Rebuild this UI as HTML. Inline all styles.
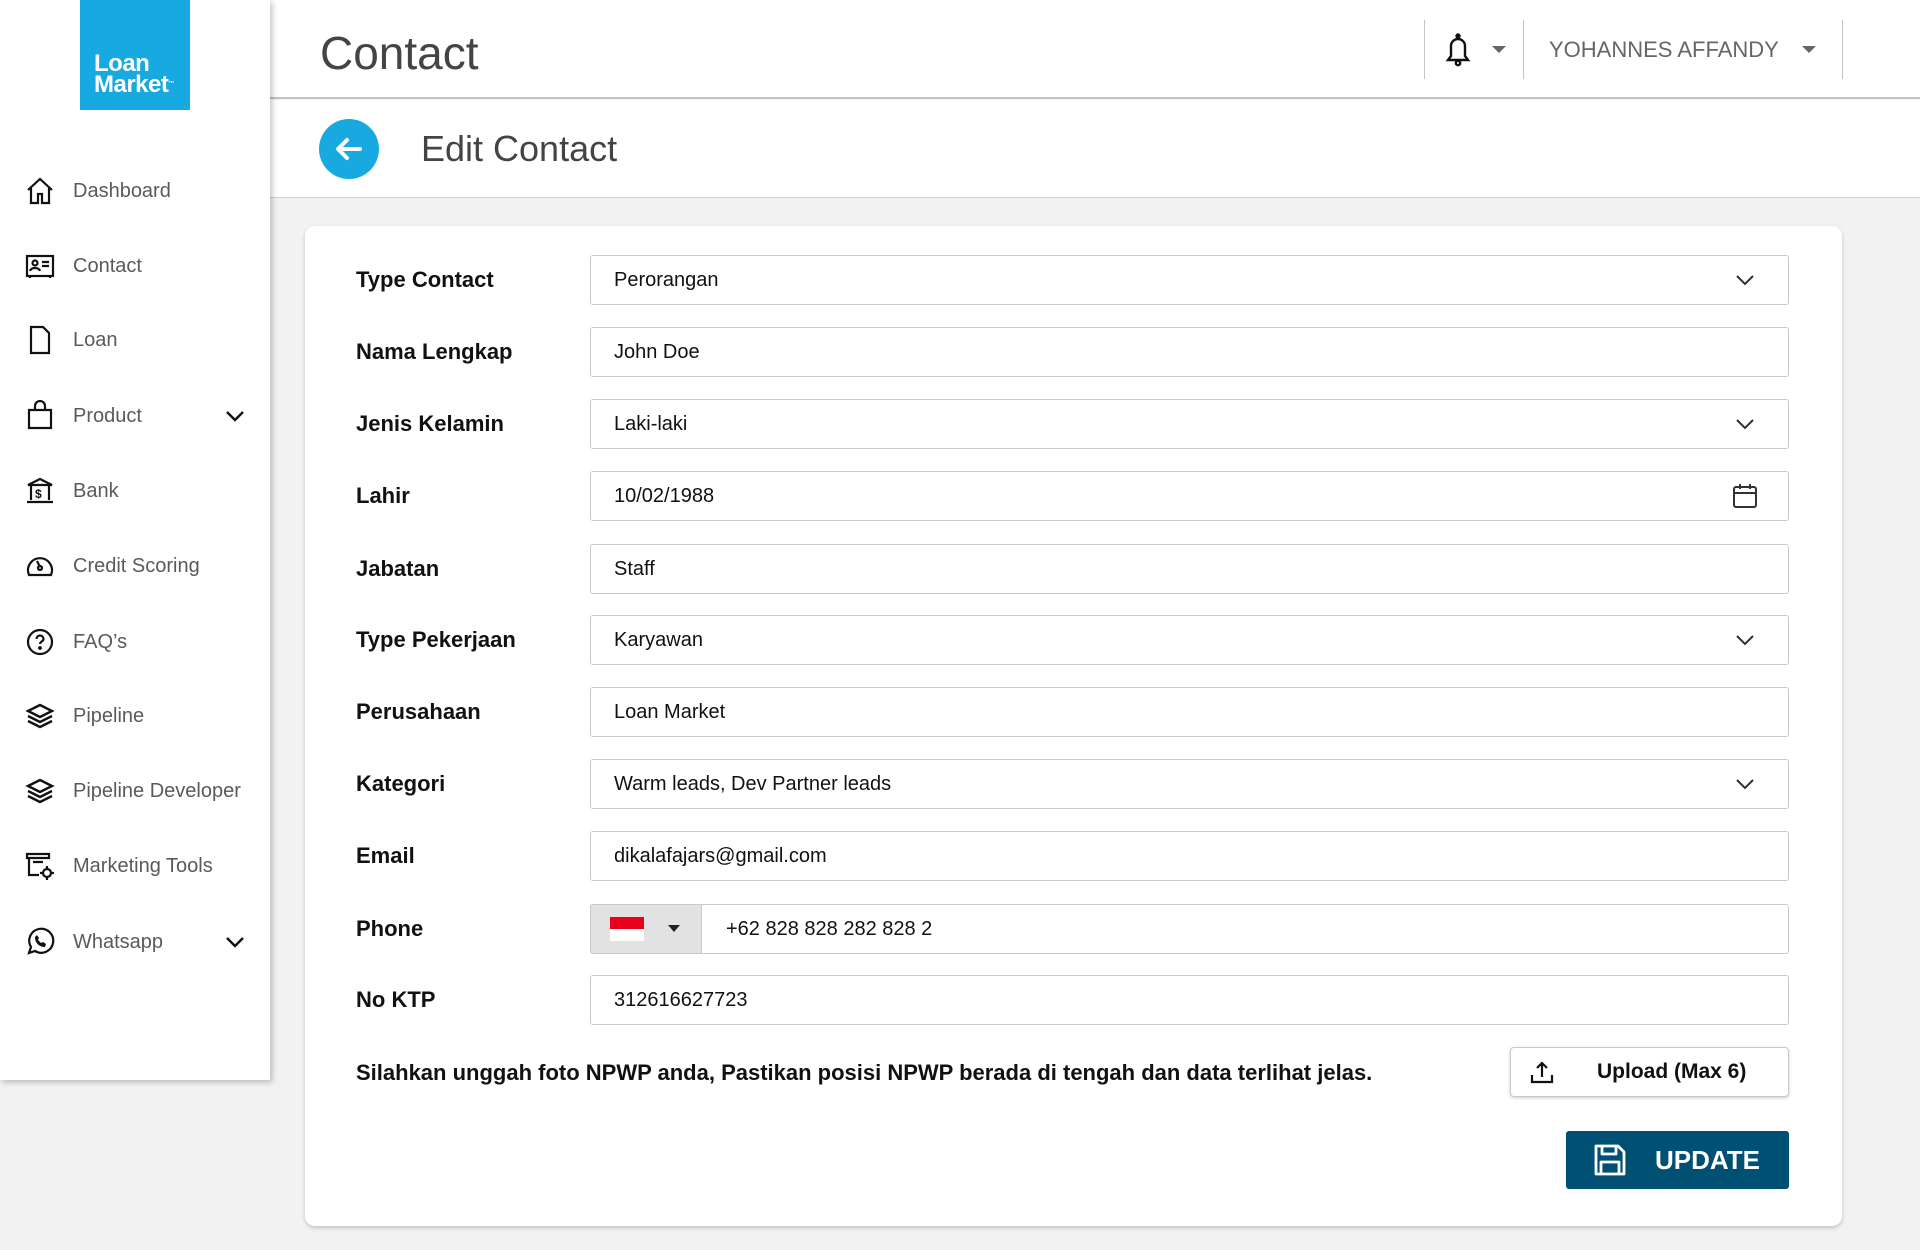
<!DOCTYPE html>
<html><head><meta charset="utf-8"><style>
*{box-sizing:border-box;margin:0;padding:0}
body{width:1920px;height:1250px;position:relative;background:#f2f2f2;font-family:"Liberation Sans",sans-serif;overflow:hidden}
.abs{position:absolute}
#side{left:0;top:0;width:270px;height:1080px;background:#fff;box-shadow:2px 2px 6px rgba(0,0,0,.25);z-index:3}
#logo{left:80px;top:0;width:110px;height:110px;background:#19a9e1;color:#fff;font-weight:bold;font-size:24px;line-height:21px;padding:53px 0 0 14px;letter-spacing:-0.5px}
.nav{left:0;width:270px;height:40px;display:flex;align-items:center;font-size:20px;color:#5a5a5a}
.nav svg{position:absolute;left:24px;width:32px;height:32px}
.nav span{position:absolute;left:73px}
.nav .chev{left:224px;width:22px;height:22px}
#top{left:270px;top:0;width:1650px;height:99px;background:#fff;border-bottom:2px solid #c4c4c4;z-index:2}
#bar{left:270px;top:100px;width:1650px;height:98px;background:#fff;border-bottom:1px solid #cfcfcf;z-index:2}
#card{left:305px;top:226px;width:1537px;height:1000px;background:#fff;border-radius:10px;box-shadow:0 2px 4px rgba(0,0,0,.2)}
.lab{left:356px;font-size:22px;font-weight:bold;color:#111;height:50px;line-height:50px}
.inp{left:590px;width:1199px;height:50px;border:1px solid #c9c9c9;border-radius:3px;background:#fff;font-size:20px;color:#111;line-height:48px;padding-left:23px}
.inp svg{position:absolute;right:32px;top:13px}
</style></head><body>
<div id="side" class="abs">
<div id="logo" class="abs">Loan<br>Market<span style="font-size:6px;vertical-align:top">™</span></div>
<div class="nav abs" style="top:171px"><svg viewBox="0 0 32 32" fill="none" stroke="#111" stroke-width="2.2"><path d="M4 15L16 4l12 11M7 13v15h7v-9h4v9h7V13"/></svg><span>Dashboard</span></div>
<div class="nav abs" style="top:246px"><svg viewBox="0 0 32 32" fill="none" stroke="#111" stroke-width="2.2"><rect x="3" y="6" width="26" height="20"/><circle cx="11" cy="13" r="2.5"/><path d="M6 21c1-4 9-4 10 0M18 12h7M18 16h7M6 26v2M26 26v2"/></svg><span>Contact</span></div>
<div class="nav abs" style="top:320px"><svg viewBox="0 0 32 32" fill="none" stroke="#111" stroke-width="2.2"><path d="M7 3h12l6 6v20H7z"/></svg><span>Loan</span></div>
<div class="nav abs" style="top:396px"><svg viewBox="0 0 32 32" fill="none" stroke="#111" stroke-width="2.2"><path d="M5 10h22v18H5zM11 10V6a5 5 0 0110 0v4"/></svg><span>Product</span><svg class="chev" viewBox="0 0 22 22" fill="none" stroke="#111" stroke-width="2.4"><path d="M3 7l8 8 8-8"/></svg></div>
<div class="nav abs" style="top:471px"><svg viewBox="0 0 32 32" fill="none" stroke="#111" stroke-width="2.2"><path d="M4 10L16 4l12 6H4zM7 10v15M25 10v15M3 27h26"/><text x="11" y="23" font-size="12" font-weight="bold" fill="#111" stroke="none">$</text></svg><span>Bank</span></div>
<div class="nav abs" style="top:546px"><svg viewBox="0 0 32 32" fill="none" stroke="#111" stroke-width="2.2"><path d="M5 25a12 12 0 1122 0zM16 17l-3-6"/><circle cx="16" cy="18" r="2"/></svg><span>Credit Scoring</span></div>
<div class="nav abs" style="top:622px"><svg viewBox="0 0 32 32" fill="none" stroke="#111" stroke-width="2.2"><circle cx="16" cy="16" r="12"/><path d="M12.5 13a3.5 3.5 0 117 0c0 2.5-3.5 2.5-3.5 5"/><circle cx="16" cy="22" r=".8" fill="#111"/></svg><span>FAQ’s</span></div>
<div class="nav abs" style="top:696px"><svg viewBox="0 0 32 32" fill="none" stroke="#111" stroke-width="2.4"><path d="M4 11l12-6 12 6-12 6zM4 16l12 6 12-6M4 21l12 6 12-6"/></svg><span>Pipeline</span></div>
<div class="nav abs" style="top:771px"><svg viewBox="0 0 32 32" fill="none" stroke="#111" stroke-width="2.4"><path d="M4 11l12-6 12 6-12 6zM4 16l12 6 12-6M4 21l12 6 12-6"/></svg><span>Pipeline Developer</span></div>
<div class="nav abs" style="top:846px"><svg viewBox="0 0 32 32" fill="none" stroke="#111" stroke-width="2.2"><path d="M3 4h22v4H3zM5 8v17h10M9 12h10"/><circle cx="23" cy="23" r="4"/><path d="M23 16v3M23 27v3M16 23h3M27 23h3"/></svg><span>Marketing Tools</span></div>
<div class="nav abs" style="top:922px"><svg viewBox="0 0 32 32" fill="none" stroke="#111" stroke-width="2.2"><path d="M5 27l2-6a12 12 0 114 4z"/><path d="M11 11c0 6 4 10 10 10l1-3-3-2-2 1c-1-1-2-2-3-3l1-2-2-3z" fill="#111" stroke="none"/></svg><span>Whatsapp</span><svg class="chev" viewBox="0 0 22 22" fill="none" stroke="#111" stroke-width="2.4"><path d="M3 7l8 8 8-8"/></svg></div>
</div>

<div id="top" class="abs">
<div class="abs" style="left:50px;top:26px;font-size:46px;color:#444">Contact</div>
<div class="abs" style="left:1154px;top:20px;width:1px;height:59px;background:#c4c4c4"></div>
<div class="abs" style="left:1253px;top:20px;width:1px;height:59px;background:#c4c4c4"></div>
<div class="abs" style="left:1572px;top:20px;width:1px;height:59px;background:#c4c4c4"></div>
<svg class="abs" style="left:1174px;top:32px" width="28" height="36" viewBox="0 0 28 36" fill="none" stroke="#111" stroke-width="2.4"><path d="M4 28h20l-3-4V14a7 7 0 00-14 0v10z"/><circle cx="14" cy="31" r="2.2"/><circle cx="14" cy="4" r="1.5" fill="#111"/></svg>
<div class="abs" style="left:1222px;top:46px;border:7px solid transparent;border-top:7px solid #666;border-bottom:0"></div>
<div class="abs" style="left:1279px;top:37px;font-size:22px;color:#666">YOHANNES AFFANDY</div>
<div class="abs" style="left:1532px;top:46px;border:7px solid transparent;border-top:7px solid #666;border-bottom:0"></div>
</div>

<div id="bar" class="abs">
<div class="abs" style="left:49px;top:19px;width:60px;height:60px;border-radius:50%;background:#19a9e1"></div>
<svg class="abs" style="left:59px;top:29px" width="40" height="40" viewBox="0 0 40 40" fill="none" stroke="#fff" stroke-width="4" stroke-linecap="round" stroke-linejoin="round"><path d="M31 20H10M18 11l-9 9 9 9"/></svg>
<div class="abs" style="left:151px;top:28px;font-size:36px;color:#444">Edit Contact</div>
</div>

<div id="card" class="abs"></div>

<div class="lab abs" style="top:255px">Type Contact</div>
<div class="inp abs" style="top:255px">Perorangan<svg width="22" height="22" viewBox="0 0 22 22" fill="none" stroke="#333" stroke-width="2"><path d="M3 7l8 8 8-8"/></svg></div>
<div class="lab abs" style="top:327px">Nama Lengkap</div>
<div class="inp abs" style="top:327px">John Doe</div>
<div class="lab abs" style="top:399px">Jenis Kelamin</div>
<div class="inp abs" style="top:399px">Laki-laki<svg width="22" height="22" viewBox="0 0 22 22" fill="none" stroke="#333" stroke-width="2"><path d="M3 7l8 8 8-8"/></svg></div>
<div class="lab abs" style="top:471px">Lahir</div>
<div class="inp abs" style="top:471px">10/02/1988<svg width="26" height="26" viewBox="0 0 26 26" fill="none" stroke="#333" stroke-width="2" style="right:30px;top:11px"><rect x="2" y="4" width="22" height="20" rx="2"/><path d="M2 10h22M8 1v5M18 1v5"/></svg></div>
<div class="lab abs" style="top:544px">Jabatan</div>
<div class="inp abs" style="top:544px">Staff</div>
<div class="lab abs" style="top:615px">Type Pekerjaan</div>
<div class="inp abs" style="top:615px">Karyawan<svg width="22" height="22" viewBox="0 0 22 22" fill="none" stroke="#333" stroke-width="2"><path d="M3 7l8 8 8-8"/></svg></div>
<div class="lab abs" style="top:687px">Perusahaan</div>
<div class="inp abs" style="top:687px">Loan Market</div>
<div class="lab abs" style="top:759px">Kategori</div>
<div class="inp abs" style="top:759px">Warm leads, Dev Partner leads<svg width="22" height="22" viewBox="0 0 22 22" fill="none" stroke="#333" stroke-width="2"><path d="M3 7l8 8 8-8"/></svg></div>
<div class="lab abs" style="top:831px">Email</div>
<div class="inp abs" style="top:831px">dikalafajars@gmail.com</div>
<div class="lab abs" style="top:904px">Phone</div>
<div class="inp abs" style="top:904px;padding-left:135px">+62 828 828 282 828 2</div>
<div class="abs" style="left:590px;top:904px;width:112px;height:50px;background:#e2e2e2;border:1px solid #c9c9c9;border-radius:3px 0 0 3px"></div>
<div class="abs" style="left:610px;top:917px;width:34px;height:12px;background:#e8001c"></div>
<div class="abs" style="left:610px;top:929px;width:34px;height:12px;background:#fff"></div>
<div class="abs" style="left:668px;top:925px;border:6px solid transparent;border-top:7px solid #222;border-bottom:0"></div>
<div class="lab abs" style="top:975px">No KTP</div>
<div class="inp abs" style="top:975px">312616627723</div>

<div class="abs" style="left:356px;top:1060px;font-size:22px;font-weight:bold;color:#111">Silahkan unggah foto NPWP anda, Pastikan posisi NPWP berada di tengah dan data terlihat jelas.</div>
<div class="abs" style="left:1510px;top:1047px;width:279px;height:50px;border:1px solid #c9c9c9;border-radius:4px;background:#fff;box-shadow:0 1px 3px rgba(0,0,0,.2)"></div>
<svg class="abs" style="left:1530px;top:1060px" width="24" height="24" viewBox="0 0 24 24" fill="none" stroke="#111" stroke-width="2.2"><path d="M2 15v7h20v-7M12 17V3M7 8l5-5 5 5"/></svg>
<div class="abs" style="left:1597px;top:1060px;font-size:21px;font-weight:bold;color:#111">Upload (Max 6)</div>
<div class="abs" style="left:1566px;top:1131px;width:223px;height:58px;background:#005073;border-radius:3px"></div>
<svg class="abs" style="left:1593px;top:1143px" width="34" height="34" viewBox="0 0 34 34" fill="none" stroke="#fff" stroke-width="2.8" stroke-linejoin="round"><path d="M3 3h22l6 6v22H3zM9 3v8h14V3M8 31V19h18v12"/></svg>
<div class="abs" style="left:1655px;top:1145px;font-size:26px;font-weight:bold;color:#fff">UPDATE</div>
</body></html>
